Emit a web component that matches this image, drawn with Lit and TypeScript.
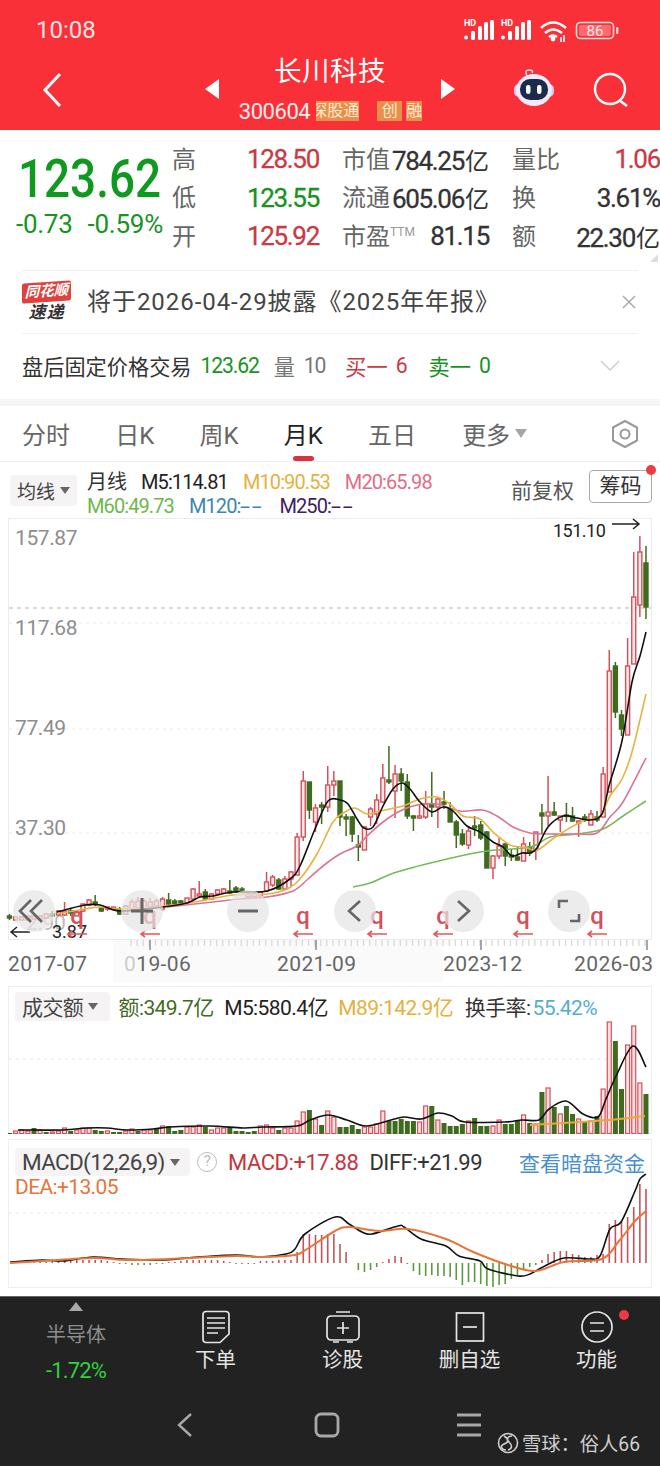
import { LitElement, html, svg, css } from 'lit';
import { customElement } from 'lit/decorators.js';

type Pt = [number, number];

// x of month i, all chart data below is in page pixels
const X = (i: number) => 9.5 + 6.12 * i;

// up, wickTop, bodyTop, bodyBottom, wickBottom
const CANDLES: number[][] = [
  [0,915,917,919,921],[1,918,918,921,921],[1,917,918,921,921],[1,916,917,921,921],[1,915,917,920,921],
  [1,916,917,920,920],[1,914,915,919,920],[0,912,915,917,918],[1,911,912,916,917],[1,903,912,916,917],
  [0,909,912,914,917],[1,911,913,917,917],[1,905,905,912,913],[1,900,901,906,907],[0,896,903,905,907],
  [0,908,909,912,913],[1,908,908,910,912],[1,908,908,910,911],[0,908,910,915,916],[1,906,907,915,916],
  [1,900,903,910,911],[1,898,902,909,910],[1,900,902,910,910],[1,899,903,908,910],[1,900,902,907,908],
  [1,898,900,910,912],[0,894,901,905,906],[0,900,902,905,906],[0,901,902,904,905],[1,899,899,904,905],
  [1,889,890,900,900],[1,882,895,897,898],[0,890,893,900,902],[1,894,895,900,901],[1,890,891,895,896],
  [1,889,890,894,894],[0,881,892,894,895],[0,887,889,893,894],[0,888,890,893,893],[1,893,895,898,899],
  [1,893,895,898,899],[1,892,893,897,897],[1,873,883,892,893],[1,876,878,886,888],[0,879,881,890,891],
  [1,877,880,890,891],[1,872,873,880,888],[1,834,838,876,876],[1,772,782,838,842],[0,783,783,811,820],
  [1,805,809,823,833],[0,803,806,808,825],[1,767,786,808,813],[1,772,782,786,797],[0,782,782,818,827],
  [0,815,818,820,837],[0,817,818,835,843],[0,836,846,848,862],[1,827,828,851,851],[1,808,810,818,827],
  [1,795,801,815,825],[1,765,779,803,804],[0,747,781,783,785],[1,766,775,792,819],[0,769,775,782,792],
  [0,775,783,817,820],[0,816,817,819,832],[1,805,817,819,820],[1,792,805,818,820],[0,773,805,808,818],
  [1,798,800,808,829],[0,792,803,805,810],[0,803,810,823,823],[0,821,823,836,849],[0,830,835,845,847],
  [1,827,832,846,850],[0,817,827,829,837],[0,822,826,839,841],[0,832,833,869,869],[1,856,857,869,880],
  [1,839,847,857,860],[0,844,845,857,867],[0,850,856,858,862],[0,848,858,861,862],[1,838,845,862,862],
  [0,843,848,854,857],[1,833,833,851,861],[0,805,814,817,835],[1,777,813,817,827],[0,803,813,816,817],
  [1,817,817,821,833],[0,804,816,817,823],[0,808,817,822,823],[1,821,822,824,838],[0,815,818,820,823],
  [1,811,815,826,826],[0,812,818,821,823],[1,768,775,818,818],[1,651,672,793,793],[0,663,667,713,719],
  [0,711,716,730,737],[1,639,667,736,736],[1,553,598,665,665],[1,537,553,606,618],[0,547,564,608,620],
];

const M5: Pt[] = [[57,913],[85,906],[100,906],[120,912],[163,908],[187,904],[200,898],[213,897],[233,893],[267,892],[290,880],[300,867],[315,830],[328,802],[340,801],[348,805],[357,820],[364,829],[373,828],[383,807],[393,790],[402,784],[410,790],[420,803],[432,813],[443,808],[453,812],[467,827],[480,833],[493,843],[503,848],[512,857],[522,854],[530,854],[537,849],[548,828],[563,817],[577,819],[590,821],[602,815],[609,787],[622,742],[632,683],[640,657],[646,633]];
const M10: Pt[] = [[57,915],[85,910],[100,908],[120,910],[165,907],[200,902],[233,896],[267,895],[287,890],[300,880],[317,855],[333,823],[345,813],[355,809],[367,815],[380,812],[403,807],[420,800],[437,798],[450,805],[463,817],[480,820],[493,833],[510,846],[523,848],[537,851],[550,842],[563,833],[583,822],[600,817],[610,797],[622,780],[632,753],[646,695]];
const M20: Pt[] = [[167,908],[213,903],[240,900],[267,898],[293,892],[308,880],[323,867],[340,855],[357,847],[367,837],[383,823],[400,812],[417,806],[437,805],[460,812],[482,811],[497,817],[513,828],[530,834],[550,835],[577,835],[597,834],[610,818],[623,803],[646,759]];
const M60: Pt[] = [[353,888],[370,884],[397,873],[447,860],[487,852],[530,848],[550,838],[577,835],[603,830],[623,817],[646,802]];

// up, top of bar
const VOLUME: number[][] = [
  [0,1134],[1,1132],[1,1131],[1,1132],[0,1129],[1,1131],[0,1133],[1,1133],[1,1132],[1,1129],
  [0,1132],[1,1131],[1,1129],[1,1129],[0,1131],[0,1132],[1,1132],[0,1133],[0,1133],[1,1132],
  [1,1130],[0,1132],[1,1131],[1,1131],[0,1130],[1,1127],[0,1127],[0,1132],[0,1131],[1,1128],
  [1,1128],[1,1126],[0,1128],[1,1131],[1,1129],[1,1129],[0,1128],[0,1132],[0,1132],[0,1133],
  [0,1132],[1,1127],[1,1126],[1,1129],[0,1131],[1,1129],[1,1129],[1,1122],[1,1113],[0,1111],
  [1,1120],[0,1126],[1,1112],[1,1118],[0,1128],[0,1128],[0,1126],[0,1130],[1,1128],[1,1128],
  [1,1125],[1,1112],[0,1122],[0,1122],[0,1120],[0,1122],[0,1122],[1,1123],[1,1107],[0,1107],
  [1,1121],[0,1124],[0,1127],[0,1127],[0,1125],[1,1122],[0,1119],[0,1127],[0,1127],[1,1127],
  [1,1121],[0,1125],[0,1125],[0,1122],[1,1116],[0,1124],[1,1125],[0,1093],[1,1089],[0,1108],
  [1,1115],[0,1107],[0,1115],[1,1120],[0,1122],[1,1122],[0,1117],[1,1090],[1,1023],[0,1042],
  [0,1090],[1,1046],[1,1027],[1,1084],[0,1095],
];
const VOL_M5: Pt[] = [[18,1131],[63,1131],[87,1129],[107,1129],[127,1131],[153,1130],[170,1128],[210,1127],[243,1129],[263,1128],[297,1127],[310,1121],[328,1116],[347,1121],[366,1127],[391,1121],[404,1118],[421,1120],[438,1114],[452,1117],[465,1123],[505,1123],[522,1121],[539,1121],[549,1110],[566,1102],[583,1115],[598,1118],[606,1100],[617,1075],[633,1047],[646,1068]];
const VOL_M89: Pt[] = [[530,1126],[580,1123],[620,1120],[645,1117]];

// bar height from the zero line, up is positive
const MACD_BARS = [0,0,0,1,1,1,1,2,2,2,2,3,3,3,3,3,2,1,-1,-1,-2,-2,-2,-2,-1,-1,1,1,2,3,3,3,3,3,3,2,1,-1,-1,-1,-1,2,2,2,3,3,3,
  11,29,29,28,28,29,29,19,11,0,-7,-9,-7,-4,1,4,7,6,-1,-8,-12,-13,-12,-13,-13,-14,-17,-22,-19,-19,-21,-23,-24,-22,-21,-16,-12,-6,-4,-2,3,9,11,12,12,9,8,6,6,8,9,39,43,41,46,56,79,74];
const DIFF: Pt[] = [[10,1263],[42,1261],[63,1262],[93,1258],[122,1260],[160,1261],[198,1258],[236,1256],[261,1258],[286,1255],[295,1250],[305,1235],[335,1218],[349,1225],[362,1233],[372,1235],[398,1227],[404,1228],[421,1240],[446,1247],[459,1257],[480,1262],[488,1270],[518,1277],[530,1275],[543,1268],[564,1259],[589,1260],[600,1257],[610,1230],[621,1223],[635,1192],[640,1180],[646,1175]];
const DEA: Pt[] = [[10,1264],[42,1262],[93,1259],[126,1261],[168,1260],[236,1257],[261,1258],[295,1256],[307,1250],[335,1232],[349,1228],[379,1232],[408,1230],[446,1240],[471,1252],[505,1265],[535,1272],[564,1263],[602,1260],[619,1242],[635,1222],[646,1212]];

const RED = '#d5505a';
const GREEN = '#3f6b1f';

// smooth curve through the points
function curve(p: Pt[]) {
  let d = `M${p[0][0]} ${p[0][1]}`;
  for (let i = 0; i < p.length - 1; i++) {
    const a = p[i - 1] || p[i], b = p[i], c = p[i + 1], e = p[i + 2] || c;
    const c1x = b[0] + (c[0] - a[0]) / 6, c1y = b[1] + (c[1] - a[1]) / 6;
    const c2x = c[0] - (e[0] - b[0]) / 6, c2y = c[1] - (e[1] - b[1]) / 6;
    d += `C${c1x.toFixed(1)} ${c1y.toFixed(1)} ${c2x.toFixed(1)} ${c2y.toFixed(1)} ${c[0]} ${c[1]}`;
  }
  return d;
}

const line = (p: Pt[], color: string, w = 1.6) =>
  svg`<path d=${curve(p)} fill="none" stroke=${color} stroke-width=${w} stroke-linejoin="round"/>`;

const candle = (c: number[], i: number) => {
  const x = X(i), col = c[0] ? RED : GREEN;
  return svg`
    <line x1=${x} x2=${x} y1=${c[1]} y2=${c[4]} stroke=${col} stroke-width="1.5"/>
    <rect x=${x - 2} y=${c[2]} width="4" height=${Math.max(c[3] - c[2], 1.5)} fill=${c[0] ? '#fbe9ea' : GREEN} stroke=${col} stroke-width="1.4"/>`;
};

const circleBtn = (x: number, icon: unknown) => svg`
  <circle cx=${x} cy="912" r="21" fill="#e4e4e4" fill-opacity="0.72"/>
  <g fill="none" stroke="#666" stroke-width="2.6" transform="translate(${x} 912)">${icon}</g>`;

const qMark = (x: number) => svg`
  <text class="q" x=${x} y="924.5" text-anchor="middle">q</text>
  <path d="M${x + 10} 935H${x - 9}M${x - 5} 932l-4 3 4 3" fill="none" stroke="#dc5a60" stroke-width="1.6"/>`;

const ticks = () => {
  const out = [];
  for (let x = 131; x < 650; x += 6.12) out.push(svg`<line x1=${x} x2=${x} y1="941" y2="947" stroke="#d9d9d9" stroke-width="1.3"/>`);
  for (const x of [150, 316, 481, 647]) out.push(svg`<line x1=${x} x2=${x} y1="941" y2="951" stroke="#8a8a8a" stroke-width="1.5"/>`);
  return out;
};

@customElement('app-root')
export class AppRoot extends LitElement {
  static styles = css`
    :host {
      display: block;
      width: 660px;
      height: 1467px;
      overflow: hidden;
      background: #fff;
      font-family: Roboto, 'Noto Sans CJK SC', sans-serif;
      color: #333;
    }
    .red { color: #c93a44; }
    .green { color: #17931f; }
    .grey { color: #777; }

    .header { height: 130px; background: #fa3038; color: #fff; }
    .status { height: 52px; display: flex; align-items: center; justify-content: space-between; padding: 8px 40px 0 36px; box-sizing: border-box; }
    .time { font-size: 24px; color: #fbe3e3; }
    .nav { display: grid; grid-template-columns: 205px 250px 1fr; height: 78px; }
    .back { padding: 20px 0 0 42px; }
    .middle { display: flex; align-items: center; justify-content: space-between; }
    .tri-l { width: 0; height: 0; border: 10px solid transparent; border-left: 0; border-right: 14px solid #fff; margin-top: -4px; }
    .tri-r { width: 0; height: 0; border: 10px solid transparent; border-right: 0; border-left: 14px solid #fff; margin-top: -4px; }
    .title-col { display: flex; flex-direction: column; align-items: center; width: 190px; align-self: flex-start; padding-top: 2px; }
    .title { font-size: 27.5px; line-height: 36px; letter-spacing: 0.5px; }
    .code-row { display: flex; align-items: center; margin-top: 8px; height: 26px; margin-left: 1px; }
    .code { font-size: 22px; letter-spacing: -0.02em; color: #ffeaea; margin-right: 6px; }
    .badge { height: 20px; line-height: 20px; background: #e8904b; color: #ffe9d2; font-size: 16px; overflow: hidden; display: flex; justify-content: flex-end; white-space: nowrap; }
    .b1 { width: 43px; margin-right: 18px; }
    .b2 { width: 25px; margin-right: 4px; justify-content: center; }
    .b3 { width: 16px; justify-content: flex-start; }
    .nav-right { display: flex; padding: 8px 0 0 59px; }
    .nav-right svg { display: block; }

    .quote { height: 140px; display: flex; padding-left: 16px; box-sizing: border-box; overflow: hidden; position: relative; }
    .quote::after { content: ''; position: absolute; right: 2px; bottom: 8px; width: 0; height: 0; border-left: 8px solid transparent; border-bottom: 8px solid #ddd; }
    .price-block { width: 156px; flex: none; padding-top: 22px; }
    .price { font-size: 53px; line-height: 54px; font-weight: 500; color: #0f9a1f; transform: scaleX(0.865); transform-origin: left center; margin-left: 2px; }
    .chg { display: flex; gap: 15px; font-size: 26px; color: #17931f; line-height: 28px; margin-top: 4px; letter-spacing: -0.01em; white-space: nowrap; }
    .q-grid { display: grid; grid-template-columns: 147px 147px 148px; column-gap: 23px; grid-auto-rows: 38.5px; padding-top: 10px; flex: none; }
    .cell { display: flex; align-items: center; justify-content: space-between; white-space: nowrap; }
    .lab { font-size: 24px; color: #666; margin-top: -4px; }
    .lab sup { font-size: 12px; color: #999; vertical-align: 9px; line-height: 0; }
    .val { font-size: 26px; letter-spacing: -0.05em; color: #333; -webkit-text-stroke: 0.3px currentColor; }
    .val.red { color: #c93a44; }
    .val.green { color: #17931f; }
    .val small { font-size: 24px; font-weight: 400; letter-spacing: 0; margin: 0 0 0 1px; -webkit-text-stroke: 0; }

    .notice { height: 64px; margin: 0 22px; border-top: 1px solid #f1f1f1; border-bottom: 1px solid #f1f1f1; box-sizing: border-box; display: flex; align-items: center; font-size: 24px; color: #444; white-space: nowrap; }
    .logo { width: 49px; margin-right: 16px; display: flex; flex-direction: column; align-items: center; }
    .logo-top { width: 49px; height: 20px; background: #e0413c; color: #fff; font-size: 14.5px; line-height: 20px; text-align: center; font-weight: 700; font-style: italic; border-radius: 2px; transform: skewY(-4deg); }
    .logo-bot { font-size: 17px; line-height: 20px; font-weight: 700; font-style: italic; color: #333; letter-spacing: 1px; }
    .notice .txt { flex: 1; letter-spacing: 0.95px; margin-top: -6px; }
    .close { margin-right: 2px; display: block; }

    .after { height: 65px; display: flex; align-items: center; padding: 0 40px 2px 22px; box-sizing: border-box; font-size: 21.2px; white-space: nowrap; }
    .after .n { letter-spacing: -0.055em; }
    .after svg { margin-left: auto; display: block; }
    .sep { height: 7px; background: #f5f5f5; }

    .tabs { height: 56px; display: flex; align-items: center; gap: 45.2px; padding-left: 22px; font-size: 24px; color: #666; position: relative; border-bottom: 1px solid #eee; box-sizing: border-box; }
    .tab { display: flex; align-items: center; gap: 5px; }
    .tab.on { color: #222; }
    .tab.on::after { content: ''; position: absolute; left: 293px; bottom: 0; width: 21px; height: 5px; border-radius: 3px; background: #d8343f; }
    .tri-d { width: 0; height: 0; border: 6px solid transparent; border-top: 9px solid #a5a5a5; border-bottom: 0; }
    .gear { position: absolute; right: 21px; top: 13px; display: block; }

    .legend { height: 56px; display: flex; box-sizing: border-box; padding: 13px 8px 0 10px; position: relative; }
    .pick { display: flex; align-items: center; gap: 5px; background: #f5f3f4; border-radius: 4px; padding: 0 7px; font-size: 19px; color: #444; white-space: nowrap; }
    .tri-s { width: 0; height: 0; border: 5.5px solid transparent; border-top: 7px solid #666; border-bottom: 0; }
    .legend .pick { height: 31px; width: 67px; box-sizing: border-box; }
    .ma { margin-left: 10px; margin-top: -5px; font-size: 20px; line-height: 24px; letter-spacing: -0.045em; white-space: nowrap; }
    .ma-row { display: flex; gap: 15px; }
    .dash { display: inline-block; width: 24px; letter-spacing: 1px; transform: scaleX(1.8); transform-origin: left center; }
    .fq { margin-left: auto; font-size: 21px; color: #555; margin-top: -1px; margin-right: 15px; }
    .chip { width: 63px; height: 33px; box-sizing: border-box; border: 1px solid #aaa; border-radius: 4px; font-size: 21px; text-align: center; line-height: 31px; color: #333; position: relative; margin-top: -5px; }
    .chip::after { content: ''; position: absolute; right: -5px; top: -6px; width: 10px; height: 10px; border-radius: 50%; background: #ee3a43; }

    .main-chart { display: block; }
    .main-chart text { font-family: Roboto, 'Noto Sans CJK SC', sans-serif; }
    .axis-y { font-size: 21px; fill: #8d8d8d; letter-spacing: -0.4px; }
    .date { font-size: 21px; fill: #666; letter-spacing: 0.4px; }
    .q { font-size: 24px; font-weight: 500; fill: #d5505a; }

    .panel { position: relative; margin: 0 8px; border: 1px solid #eee; box-sizing: border-box; }
    .panel > svg { position: absolute; left: -1px; top: -1px; display: block; }
    .panel-head { position: relative; display: flex; align-items: center; font-size: 21px; white-space: nowrap; letter-spacing: -0.028em; }
    .vol { height: 148px; }
    .vol .panel-head { padding: 4px 0 0 6px; gap: 10.5px; }
    .vol .pick { height: 29px; width: 95px; box-sizing: border-box; font-size: 21px; margin-right: -2px; }
    .macd { height: 149px; margin-top: 5px; }
    .macd .panel-head { padding: 7px 6px 0 6px; letter-spacing: -0.022em; }
    .macd .pick { height: 28px; width: 175px; box-sizing: border-box; font-size: 22.5px; letter-spacing: -0.03em; gap: 5px; }
    .help { width: 20px; height: 20px; border: 1.5px solid #bbb; border-radius: 50%; box-sizing: border-box; font-size: 15px; line-height: 17px; text-align: center; color: #bbb; margin: 0 11px 0 7px; }
    .dea { position: relative; font-size: 21px; color: #e8743b; letter-spacing: -0.03em; padding-left: 6px; line-height: 24px; margin-top: -2px; }
    .turn { color: #333; margin-left: 1px; }
    .turn span { color: #55acd8; margin-left: 2px; }

    .bottom { position: relative; margin-top: 8px; height: 170px; background: #222; color: #e6e6e6; border-top: 1px solid #666; box-sizing: border-box; }
    .toolbar { display: flex; height: 86px; }
    .sector { width: 152px; display: flex; flex-direction: column; align-items: center; color: #8c8c8c; font-size: 20px; }
    .up { width: 0; height: 0; border: 7px solid transparent; border-bottom: 9px solid #aaa; border-top: 0; margin-top: 5px; }
    .sector .nm { line-height: 28px; margin-top: 10px; }
    .sector .pc { color: #2fd23f; font-size: 22px; letter-spacing: -0.04em; line-height: 28px; margin-top: 8px; }
    .tool { width: 127px; display: flex; flex-direction: column; align-items: center; font-size: 20.5px; position: relative; padding-top: 13px; }
    .tool svg { display: block; height: 34px; }
    .tool span { line-height: 28px; margin-top: 2px; }
    .tool.dot::after { content: ''; position: absolute; left: 86px; top: 13px; width: 10px; height: 10px; border-radius: 50%; background: #ee3a43; }
    .sysnav { display: grid; grid-template-columns: repeat(3, 142px); padding: 29px 0 0 114px; justify-items: center; }
    .sysnav svg { display: block; }
    .mark { position: absolute; right: 20px; bottom: 9px; display: flex; align-items: center; gap: 3px; font-size: 19.3px; color: #cfcfcf; }
  `;

  private statusIcons() {
    const signal = (x: number) => svg`
      <text x=${x} y="26" font-size="9" font-weight="700" fill="#fff" font-family="Roboto, sans-serif">HD</text>
      <g fill="#fff">
        <circle cx=${x + 2} cy="37.5" r="2"/>
        <rect x=${x + 7} y="31" width="4" height="9" rx="1.5"/>
        <rect x=${x + 14} y="26" width="4" height="14" rx="1.5"/>
        <rect x=${x + 20} y="22" width="4" height="18" rx="1.5"/>
        <rect x=${x + 26} y="20" width="4" height="20" rx="1.5"/>
      </g>`;
    return html`<svg width="160" height="32" viewBox="462 14 160 32">
      ${signal(466)}${signal(503)}
      <g fill="none" stroke="#fff" stroke-width="2.6">
        <path d="M543 28q12-11 25 0"/><path d="M547 33q8-7 17 0"/><path d="M551 37q4-3 8 0"/>
      </g>
      <circle cx="555" cy="39" r="2.4" fill="#fff"/>
      <path d="M563 37v5M566 35v7" stroke="#fff" stroke-width="1.6"/>
      <rect x="578.5" y="22.5" width="37" height="16" rx="4" fill="none" stroke="#ffd9d9" stroke-width="1.6"/>
      <rect x="581" y="25" width="32" height="11" rx="2" fill="#ff6a6e"/>
      <rect x="618" y="27" width="2.4" height="7" rx="1.2" fill="#ffd9d9"/>
      <text x="597" y="36" text-anchor="middle" font-size="15" fill="#ffe5e5" font-family="Roboto, sans-serif">86</text>
    </svg>`;
  }

  private header() {
    return html`<div class="header">
      <div class="status"><span class="time">10:08</span>${this.statusIcons()}</div>
      <div class="nav">
        <div class="back">
          <svg width="20" height="36" viewBox="0 0 20 36"><path d="M18 2 3 18l15 16" fill="none" stroke="#fff" stroke-width="3"/></svg>
        </div>
        <div class="middle">
          <div class="tri-l"></div>
          <div class="title-col">
            <div class="title">长川科技</div>
            <div class="code-row">
              <span class="code">300604</span>
              <span class="badge b1">深股通</span>
              <span class="badge b2">创</span>
              <span class="badge b3">融</span>
            </div>
          </div>
          <div class="tri-r"></div>
        </div>
        <div class="nav-right">
          <svg width="130" height="62" viewBox="515 60 130 62">
            <path d="M528 76q-3-6 2-6t3 3" fill="none" stroke="#f1dce8" stroke-width="1.6"/>
            <rect x="515" y="84" width="40" height="13" rx="5" fill="#d7c6ee"/>
            <ellipse cx="535" cy="90" rx="18" ry="16" fill="#f3eafa"/>
            <rect x="521" y="79" width="28" height="21" rx="10" fill="#1c2b4d"/>
            <rect x="527" y="85" width="4.5" height="9" rx="2.2" fill="#fff"/>
            <rect x="538" y="85" width="4.5" height="9" rx="2.2" fill="#fff"/>
            <circle cx="611" cy="89" r="15" fill="none" stroke="#fff" stroke-width="2.4"/>
            <path d="m620 100 8 6" stroke="#fff" stroke-width="2.6"/>
          </svg>
        </div>
      </div>
    </div>`;
  }

  private quote() {
    return html`<div class="quote">
      <div class="price-block">
        <div class="price">123.62</div>
        <div class="chg"><span>-0.73</span><span>-0.59%</span></div>
      </div>
      <div class="q-grid">
        <div class="cell"><span class="lab">高</span><span class="val red">128.50</span></div>
        <div class="cell"><span class="lab">市值</span><span class="val">784.25<small>亿</small></span></div>
        <div class="cell"><span class="lab">量比</span><span class="val red">1.06</span></div>
        <div class="cell"><span class="lab">低</span><span class="val green">123.55</span></div>
        <div class="cell"><span class="lab">流通</span><span class="val">605.06<small>亿</small></span></div>
        <div class="cell"><span class="lab">换</span><span class="val">3.61%</span></div>
        <div class="cell"><span class="lab">开</span><span class="val red">125.92</span></div>
        <div class="cell"><span class="lab">市盈<sup>TTM</sup></span><span class="val">81.15</span></div>
        <div class="cell"><span class="lab">额</span><span class="val">22.30<small>亿</small></span></div>
      </div>
    </div>
    <div class="notice">
      <div class="logo"><div class="logo-top">同花顺</div><div class="logo-bot">速递</div></div>
      <div class="txt">将于2026-04-29披露《2025年年报》</div>
      <svg class="close" width="14" height="14" viewBox="0 0 14 14"><path d="m1 1 12 12M13 1 1 13" stroke="#aaa" stroke-width="1.5"/></svg>
    </div>
    <div class="after">
      <span>盘后固定价格交易</span>
      <span class="n green" style="margin-left:9px">123.62</span>
      <span class="grey" style="margin-left:15px">量</span>
      <span class="n grey" style="margin-left:9px">10</span>
      <span class="red" style="margin-left:20px">买一</span>
      <span class="n red" style="margin-left:8px">6</span>
      <span class="green" style="margin-left:22px">卖一</span>
      <span class="n green" style="margin-left:8px">0</span>
      <svg width="20" height="12" viewBox="0 0 20 12"><path d="m1 1 9 9 9-9" fill="none" stroke="#cfcfcf" stroke-width="1.5"/></svg>
    </div>
    <div class="sep"></div>`;
  }

  private tabs() {
    return html`<div class="tabs">
      <span class="tab">分时</span>
      <span class="tab">日K</span>
      <span class="tab">周K</span>
      <span class="tab on">月K</span>
      <span class="tab">五日</span>
      <span class="tab" style="margin-left:1px">更多<i class="tri-d"></i></span>
      <svg class="gear" width="28" height="30" viewBox="0 0 28 30">
        <path d="M14 2 26 8.500v13L14 28 2 21.500v-13z" fill="none" stroke="#999" stroke-width="2" stroke-linejoin="round"/>
        <circle cx="14" cy="15" r="4.500" fill="none" stroke="#999" stroke-width="2"/>
      </svg>
    </div>
    <div class="legend">
      <div class="pick">均线<i class="tri-s"></i></div>
      <div class="ma">
        <div class="ma-row">
          <span style="color:#333;letter-spacing:0;margin-right:-1px">月线</span>
          <span style="color:#222">M5:114.81</span>
          <span style="color:#e5b13c">M10:90.53</span>
          <span style="color:#e46c87">M20:65.98</span>
        </div>
        <div class="ma-row">
          <span style="color:#6cb94a">M60:49.73</span>
          <span style="color:#3d87ae">M120:<span class="dash">--</span></span>
          <span style="color:#402060">M250:<span class="dash">--</span></span>
        </div>
      </div>
      <div class="fq">前复权</div>
      <div class="chip">筹码</div>
    </div>`;
  }

  private mainChart() {
    return html`<svg class="main-chart" width="660" height="468" viewBox="0 519 660 468">
      <rect x="113" y="941" width="330" height="42" fill="#fafafa"/>
      <rect x="8.500" y="519.500" width="643" height="421" fill="none" stroke="#ececec"/>
      ${[624, 730, 834].map(y => svg`<line x1="9" x2="651" y1=${y} y2=${y} stroke="#e8e8e8" stroke-dasharray="3 4"/>`)}
      <line x1="9" x2="651" y1="609" y2="609" stroke="#b9b39c" stroke-dasharray="4 4"/>
      <text class="axis-y" x="15" y="546">157.87</text>
      <text class="axis-y" x="15" y="636">117.68</text>
      <text class="axis-y" x="15" y="736">77.49</text>
      <text class="axis-y" x="15" y="836">37.30</text>
      <text class="axis-y" x="26" y="931" style="fill:#bbb">2.90</text>
      ${CANDLES.map(candle)}
      ${line(M60, '#76b957')}
      ${line(M20, '#de7390')}
      ${line(M10, '#e6b342')}
      ${line(M5, '#111')}
      <text x="553" y="538" font-size="18" fill="#222" letter-spacing="-0.5">151.10</text>
      <path d="M612 525h27m-6-5 6 5-6 5" fill="none" stroke="#222" stroke-width="1.500"/>
      <text x="52" y="939" font-size="18" fill="#222">3.87</text>
      <path d="M30 933H11m6-5-6 5 6 5" fill="none" stroke="#222" stroke-width="1.500"/>
      ${[77, 150, 303, 377, 443, 523, 597].map(qMark)}
      ${circleBtn(34, svg`<path d="M-3-11-14 0l11 11M8-11-3 0 8 11"/>`)}
      ${circleBtn(142, svg`<path d="M-11 0h22M0-13V13" stroke-width="3"/>`)}
      ${circleBtn(248, svg`<path d="M-10 0h20" stroke-width="3"/>`)}
      ${circleBtn(355, svg`<path d="M5-10-6 0 5 10"/>`)}
      ${circleBtn(463, svg`<path d="M-5-10 6 0-5 10"/>`)}
      ${circleBtn(569, svg`<path d="M-10-3v-7h9M10 3v7h-9"/>`)}
      ${ticks()}
      <text class="date" x="8" y="972">2017-07</text>
      <text class="date" x="124" y="972"><tspan style="fill:#ccc">0</tspan>19-06</text>
      <text class="date" x="277" y="972">2021-09</text>
      <text class="date" x="443" y="972">2023-12</text>
      <text class="date" x="574" y="972">2026-03</text>
    </svg>`;
  }

  private volume() {
    return html`<div class="panel vol">
      <svg width="644" height="148" viewBox="8 987 644 148">
        <line x1="9" x2="651" y1="1060" y2="1060" stroke="#e8e8e8" stroke-dasharray="3 4"/>
        ${VOLUME.map((v, i) => v[0]
          ? svg`<rect x=${X(i) - 2} y=${v[1]} width="4" height=${1134.500 - v[1]} fill="#fbdfe1" stroke=${RED} stroke-width="1.200"/>`
          : svg`<rect x=${X(i) - 2.500} y=${v[1]} width="5" height=${1135 - v[1]} fill=${GREEN}/>`)}
        ${line(VOL_M5, '#111')}
        ${line(VOL_M89, '#e6a93a', 2)}
      </svg>
      <div class="panel-head">
        <div class="pick">成交额<i class="tri-s"></i></div>
        <span style="color:#3f6b1f">额:349.7亿</span>
        <span style="color:#222">M5:580.4亿</span>
        <span style="color:#e5b13c">M89:142.9亿</span>
        <span class="turn">换手率:<span>55.42%</span></span>
      </div>
    </div>`;
  }

  private macd() {
    return html`<div class="panel macd">
      <svg width="644" height="149" viewBox="8 1140 644 149">
        <line x1="9" x2="651" y1="1214" y2="1214" stroke="#e8e8e8" stroke-dasharray="3 4"/>
        ${MACD_BARS.map((v, i) => svg`<line x1=${X(i)} x2=${X(i)} y1="1264" y2=${1264 - v} stroke=${v >= 0 ? '#c4545c' : '#5b9a3c'} stroke-width="1.600"/>`)}
        ${line(DIFF, '#111')}
        ${line(DEA, '#e8743b', 2)}
      </svg>
      <div class="panel-head">
        <div class="pick">MACD(12,26,9)<i class="tri-s"></i></div>
        <div class="help">?</div>
        <span style="color:#c5353d;font-size:22px">MACD:+17.88</span>
        <span style="color:#333;font-size:22px;margin-left:11px">DIFF:+21.99</span>
        <span style="color:#4a90d0;margin-left:auto;letter-spacing:0">查看暗盘资金</span>
      </div>
      <div class="dea">DEA:+13.05</div>
    </div>`;
  }

  private bottom() {
    return html`<div class="bottom">
      <div class="toolbar">
        <div class="sector">
          <i class="up"></i>
          <div class="nm">半导体</div>
          <div class="pc">-1.72%</div>
        </div>
        <div class="tool">
          <svg width="30" height="34" viewBox="0 0 30 34" fill="none" stroke="#e6e6e6" stroke-width="1.700">
            <path d="M5 1.500h20a3 3 0 0 1 3 3V24l-9 8.500H5a3 3 0 0 1-3-3v-25a3 3 0 0 1 3-3z"/>
            <path d="M6 8h18M6 13h18M6 18h18M6 23h11"/>
          </svg>
          <span>下单</span>
        </div>
        <div class="tool">
          <svg width="36" height="34" viewBox="0 0 36 34" fill="none" stroke="#e6e6e6" stroke-width="1.700">
            <rect x="2" y="6" width="32" height="24" rx="4"/>
            <path d="M11 2h14M8 32h6M22 32h6M12 18h12M18 12v12"/>
          </svg>
          <span>诊股</span>
        </div>
        <div class="tool">
          <svg width="30" height="34" viewBox="0 0 30 34" fill="none" stroke="#e6e6e6" stroke-width="1.700">
            <rect x="1.500" y="3" width="27" height="28"/>
            <path d="M8 17h14"/>
          </svg>
          <span>删自选</span>
        </div>
        <div class="tool dot">
          <svg width="32" height="34" viewBox="0 0 32 34" fill="none" stroke="#e6e6e6" stroke-width="1.700">
            <circle cx="16" cy="17" r="15"/>
            <path d="M9 13h14M9 21h14"/>
          </svg>
          <span>功能</span>
        </div>
      </div>
      <div class="sysnav">
        <svg width="18" height="26" viewBox="0 0 18 26"><path d="M15 2 3 13l12 11" fill="none" stroke="#a8a8a8" stroke-width="2.400"/></svg>
        <svg width="26" height="26" viewBox="0 0 26 26"><rect x="2" y="2" width="22" height="22" rx="5" fill="none" stroke="#a8a8a8" stroke-width="2.800"/></svg>
        <svg width="26" height="26" viewBox="0 0 26 26"><path d="M1 3h24M1 13h24M1 23h24" stroke="#a8a8a8" stroke-width="2.800"/></svg>
      </div>
      <div class="mark">
        <svg width="22" height="22" viewBox="0 0 22 22" fill="none" stroke="#cfcfcf" stroke-width="1.600">
          <circle cx="11" cy="11" r="9.500"/>
          <path d="M7 4c5 3 5 6 0 8s-2 6 2 6M15 4c-4 0-6 3-3 6s4 6-1 8"/>
        </svg>
        <span>雪球：俗人66</span>
      </div>
    </div>`;
  }

  render() {
    return html`
      ${this.header()}
      ${this.quote()}
      ${this.tabs()}
      ${this.mainChart()}
      ${this.volume()}
      ${this.macd()}
      ${this.bottom()}
    `;
  }
}
